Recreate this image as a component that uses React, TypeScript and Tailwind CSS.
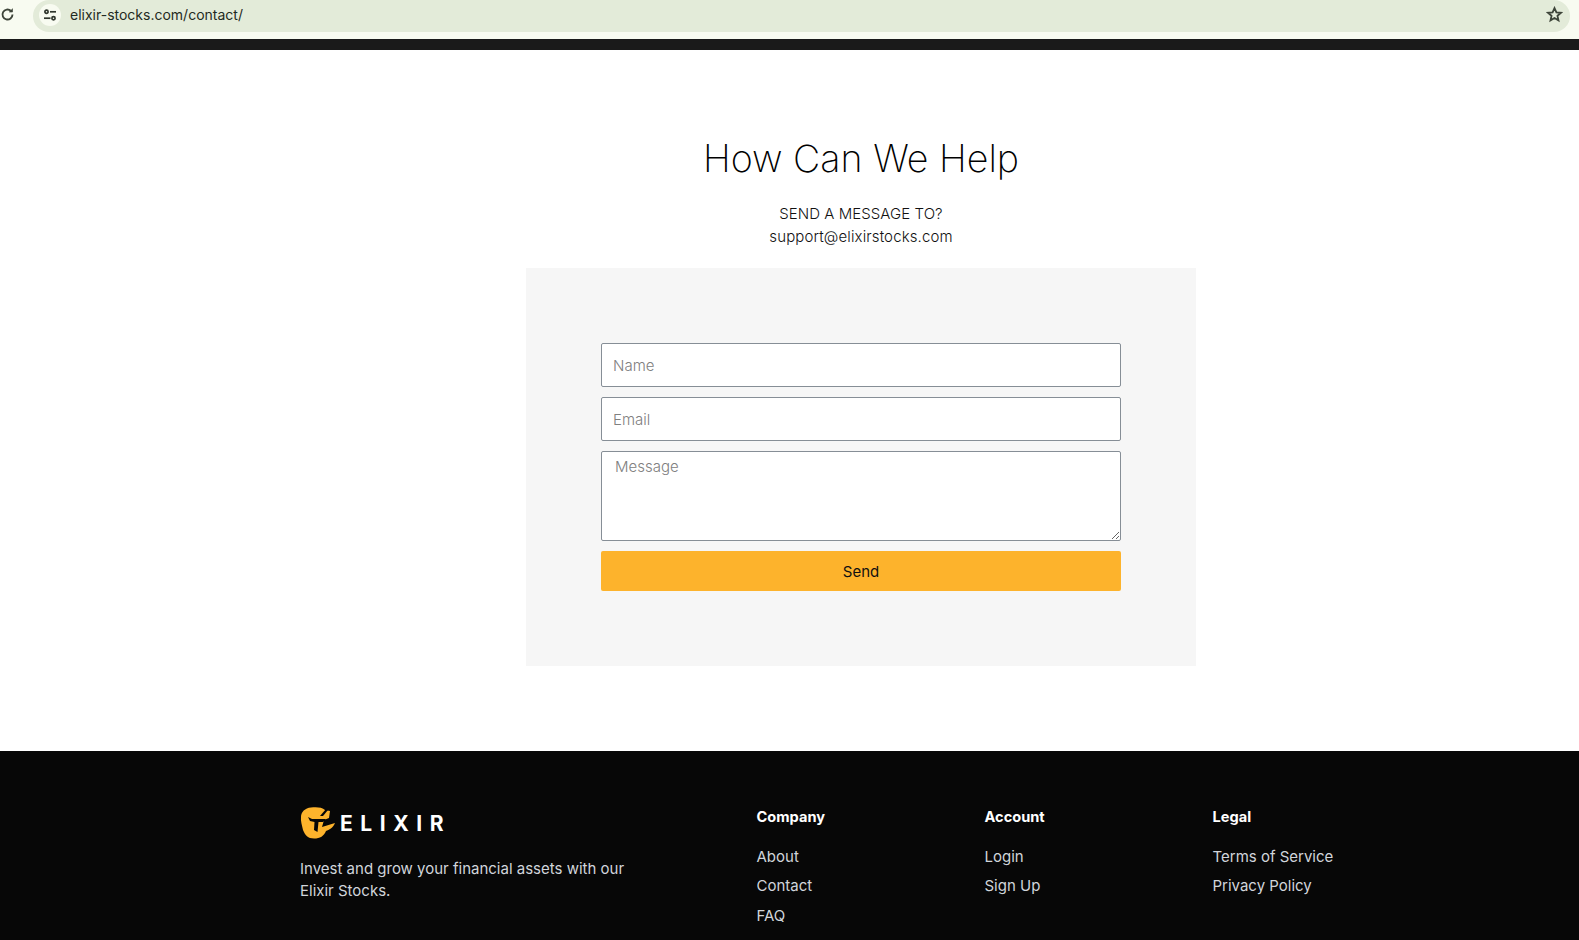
import React from "react";

const font = { fontFamily: "Inter, 'Liberation Sans', sans-serif" };

function Logo() {
  return (
    <div className="flex items-center gap-[4px]">
      <svg width="36" height="32" viewBox="0 0 36 32">
        <path fill="#FDB32C" d="M1 10 C1 5 5 1 11 0.5 C16 0 22 0 25 3 L30 4 L29 11 L24 13 L22 20 L35 16 C33 21 29 23 26 24 C24 29 20 31.5 14 31.5 C8 31.5 5 28 3 23 C2 18 0.5 14 1 10 Z" />
        <path fill="#070707" d="M8 10 L12 12 L26 12 L23 15 L18.5 15 L17.5 25 L14 23 L14.5 15 L10 14 Z" />
        <path fill="#070707" d="M26 2 L20 9 L23 9 L28 3 Z" />
      </svg>
      <span className="text-white text-[21px] font-bold tracking-[0.36em] leading-none">ELIXIR</span>
    </div>
  );
}

function FooterCol({ title, links }: { title: string; links: string[] }) {
  return (
    <div className="w-[228px]">
      <div className="text-white text-[14.6px] font-bold leading-5 mb-[20px]">{title}</div>
      <ul className="flex flex-col gap-[9.4px]">
        {links.map((l) => (
          <li key={l} className="text-[#d1d5db] text-[15px] leading-5">{l}</li>
        ))}
      </ul>
    </div>
  );
}

export default function App() {
  return (
    <div style={font} className="h-[940px] overflow-hidden bg-white text-[#111]">
      <div className="h-[39px] bg-[#f8fbf1] flex items-start">
        <svg className="ml-[0px] mt-[7px]" width="15" height="15" viewBox="0 0 24 24" fill="none" stroke="#3d4439" strokeWidth="3">
          <path d="M20 12a8 8 0 1 1-2.6-5.9" />
          <path d="M20 2.5v5.5h-5.5" fill="#3d4439" strokeWidth="1" />
        </svg>
        <div className="ml-[18px] w-[1537px] h-[32px] bg-[#e3ebd9] rounded-r-[16px] rounded-l-[16px] flex items-center pl-[6px] pr-[7px] pb-[3px]">
          <div className="w-[22px] h-[22px] rounded-full bg-[#f8fbf1] flex items-center justify-center">
            <svg width="14" height="14" viewBox="0 0 14 14" fill="none" stroke="#30362d" strokeWidth="1.7">
              <circle cx="3.5" cy="3.8" r="1.6" />
              <path d="M7 3.8h6" />
              <circle cx="10.5" cy="10.2" r="1.6" />
              <path d="M1 10.2h6.5" />
            </svg>
          </div>
          <span className="ml-[9px] text-[14px] text-[#1f2a22]">elixir-stocks.com/contact/</span>
          <svg className="ml-auto" width="17" height="17" viewBox="0 0 24 24" fill="none" stroke="#3d4439" strokeWidth="2.6">
            <path d="M12 3l2.7 6 6.3.6-4.8 4.3 1.4 6.4L12 17l-5.6 3.3 1.4-6.4L3 9.6 9.3 9z" />
          </svg>
        </div>
      </div>
      <div className="h-[11px] bg-[#1a1a1a]" />

      <main className="h-[701px] pt-[85px] ml-[526px] w-[670px] flex flex-col">
        <h1 className="text-[37.6px] font-extralight leading-[48px] text-center text-black">How Can We Help</h1>
        <p className="mt-[19px] text-center text-[15px] font-light tracking-[0.05px] leading-[23px]">SEND A MESSAGE TO?</p>
        <p className="text-center text-[15px] font-light tracking-[0.12px] leading-[23px]">support@elixirstocks.com</p>
        <form className="mt-[20px] h-[398px] bg-[#f6f6f6] px-[75px] pt-[75px] flex flex-col">
          <input placeholder="Name" className="h-[44px] w-full border border-[#868e96] rounded-[2px] bg-white px-[11px] text-[15px] font-light placeholder:text-[#808080]" />
          <input placeholder="Email" className="mt-[10px] h-[44px] w-full border border-[#868e96] rounded-[2px] bg-white px-[11px] text-[15px] font-light placeholder:text-[#808080]" />
          <textarea placeholder="Message" className="mt-[10px] h-[90px] w-full border border-[#868e96] rounded-[2px] bg-white px-[13px] py-[4px] text-[15px] font-light placeholder:text-[#808080]" />
          <button type="button" className="mt-[10px] h-[40px] w-full rounded-[2px] bg-[#fdb32c] pt-[2px] text-[15px] font-normal text-[#111]">Send</button>
        </form>
      </main>

      <footer className="h-[189px] bg-[#070707] pt-[56px] pl-[300px] flex items-start">
        <div className="w-[456.5px]">
          <Logo />
          <p className="mt-[19px] text-[#d1d5db] text-[15px] leading-[22px] w-[340px]">
            Invest and grow your financial assets with our Elixir Stocks.
          </p>
        </div>
        <FooterCol title="Company" links={["About", "Contact", "FAQ"]} />
        <FooterCol title="Account" links={["Login", "Sign Up"]} />
        <FooterCol title="Legal" links={["Terms of Service", "Privacy Policy"]} />
      </footer>
    </div>
  );
}
